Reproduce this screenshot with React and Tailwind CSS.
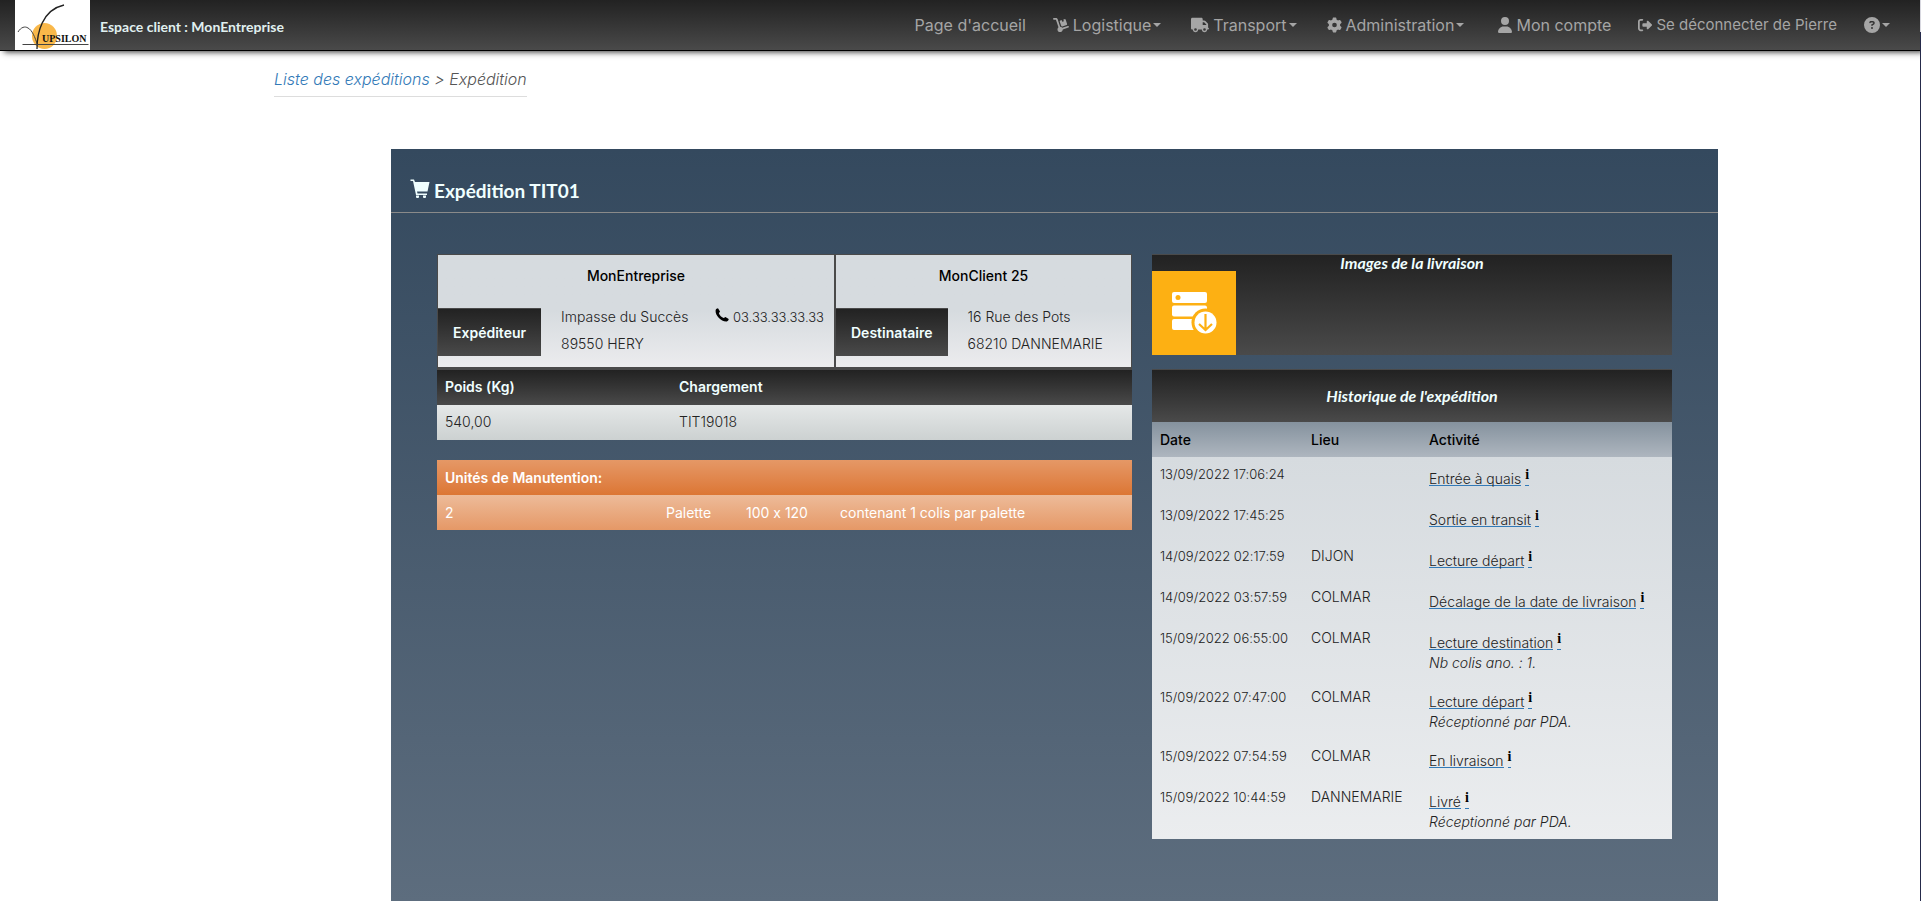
import { FaDolly, FaTruck, FaGear, FaUser, FaRightFromBracket, FaCircleQuestion } from "react-icons/fa6";

const navLink = "flex items-center gap-1 text-[#a5a5a5] hover:text-white";

function Caret() {
  return <span className="-ml-0.5 inline-block border-x-4 border-t-4 border-x-transparent border-t-current" />;
}

function Logo() {
  return (
    <svg viewBox="0 0 75 50" className="h-[50px] w-[75px] shrink-0 bg-white" role="img" aria-label="Yupsilon">
      <ellipse cx="29.500" cy="36" rx="12.500" ry="13" fill="#f9b84a" />
      <path d="M3 32 C6 27 10 26 13 28 C17 30 20 37 22.500 45" fill="none" stroke="#444" strokeWidth="1" />
      <path d="M22 49 C22 33 27 10 49 5" fill="none" stroke="#222" strokeWidth="1.300" />
      <path d="M7.500 44.500 H73.500" stroke="#444" strokeWidth="1.200" />
      <text x="27" y="42" fontFamily="Liberation Serif, serif" fontWeight="700" fontSize="10" fill="#111">UPSILON</text>
    </svg>
  );
}

function CartIcon() {
  return (
    <svg viewBox="0 0 20 20" className="mb-1.5 h-5 w-5" fill="currentColor" aria-hidden="true">
      <path d="M0.500 0.500 H4 L5 3 H19.500 L17.500 12.500 H7 L7.500 14.500 H17 V16 H6 L3 2 H0.500Z" />
      <path d="M6 16.500 H9 V18 L8.500 19 H6.500 L6 18Z M13 16.500 H16 V18 L15.500 19 H13.500 L13 18Z" />
    </svg>
  );
}

function HandsetIcon() {
  return (
    <svg viewBox="0 0 14 14" className="-mt-1 h-[14px] w-[14px] text-black" fill="currentColor" aria-hidden="true">
      <path d="M0.600 2.200 C1 1 2 0.300 3 0.300 L5 3.600 C5 4.400 3.900 4.600 3.900 5.300 C4.500 7.300 6.700 9.500 8.700 10.100 C9.400 10.100 9.600 9 10.400 9 L13.700 11 C13.700 12 13 13 11.800 13.400 C6.500 14 0 7.500 0.600 2.200Z" />
    </svg>
  );
}

function ServerDownloadIcon() {
  return (
    <svg viewBox="0 0 84 84" className="h-[84px] w-[84px]" aria-hidden="true">
      <rect x="20" y="21" width="35" height="11" rx="2" fill="#fff" />
      <circle cx="26" cy="26.500" r="2.500" fill="#fdb013" />
      <rect x="20" y="34.500" width="35" height="11" rx="2" fill="#fff" />
      <rect x="20" y="48" width="35" height="11" rx="2" fill="#fff" />
      <circle cx="53.500" cy="51.500" r="14" fill="#fdb013" />
      <circle cx="53.500" cy="51.500" r="11" fill="#fff" />
      <path d="M53.500 43 V59 M47 53 L53.500 59 L60 53" fill="none" stroke="#fdb013" strokeWidth="2.200" />
    </svg>
  );
}

const events = [
  { date: "13/09/2022 17:06:24", place: "", label: "Entrée à quais" },
  { date: "13/09/2022 17:45:25", place: "", label: "Sortie en transit" },
  { date: "14/09/2022 02:17:59", place: "DIJON", label: "Lecture départ" },
  { date: "14/09/2022 03:57:59", place: "COLMAR", label: "Décalage de la date de livraison" },
  { date: "15/09/2022 06:55:00", place: "COLMAR", label: "Lecture destination", note: "Nb colis ano. : 1." },
  { date: "15/09/2022 07:47:00", place: "COLMAR", label: "Lecture départ", note: "Réceptionné par PDA." },
  { date: "15/09/2022 07:54:59", place: "COLMAR", label: "En livraison" },
  { date: "15/09/2022 10:44:59", place: "DANNEMARIE", label: "Livré", note: "Réceptionné par PDA." },
];

function Party({ name, role, lines, phone }) {
  return (
    <div className="border border-[#4a4a4a] bg-linear-to-b from-[#d6dbdf] from-50% to-[#ececee] pb-[5px]">
      <h2 className="flex h-[53px] items-center justify-center pb-3 font-medium text-black">{name}</h2>
      <div className="flex items-start">
        <div className="flex h-12 items-center border-t border-[#4a4a4a] bg-linear-to-b from-[#222] to-[#4a4a4a] px-[15px] font-semibold text-[#f0ffff]">
          {role}
        </div>
        <div className="ml-5 flex flex-1 justify-between pr-[10px]">
          <div>
            {lines.map((line) => (
              <p key={line} className="h-[27px] leading-[18px]">{line}</p>
            ))}
          </div>
          {phone && (
            <p className="flex h-[18px] items-center gap-1 text-[13px]">
              <HandsetIcon />
              {phone}
            </p>
          )}
        </div>
      </div>
    </div>
  );
}

export default function App() {
  return (
    <div className="flex min-h-screen bg-white font-['Inter','Liberation_Sans',sans-serif] text-sm leading-5 font-light text-[#222] [font-feature-settings:'calt'_0]">
      <div className="min-w-0 flex-1">
        <header className="flex h-[51px] items-center border-b border-black bg-linear-to-b from-[#222] to-[#4a4a4a] pl-[15px] shadow-[4px_1px_6px_#333]">
          <Logo />
          <p className="ml-[10px] pt-1 font-['Lato',sans-serif] text-sm font-bold text-[#e0f0f0]">Espace client : MonEntreprise</p>
          <nav className="mr-[30px] ml-auto flex items-center text-base font-normal">
            <a href="#accueil" className={navLink}>Page d'accueil</a>
            <button className={navLink + " ml-[27px]"}><FaDolly className="h-4 w-4" />Logistique<Caret /></button>
            <button className={navLink + " ml-[30px]"}><FaTruck className="h-4 w-[18px]" />Transport<Caret /></button>
            <button className={navLink + " ml-[30px]"}><FaGear className="h-4 w-[15px]" />Administration<Caret /></button>
            <a href="#compte" className={navLink + " ml-[34px]"}><FaUser className="h-4 w-[14px]" />Mon compte</a>
            <a href="#deconnexion" className={navLink + " ml-[27px] text-[15px]"}><FaRightFromBracket className="h-[14px] w-[14px]" />Se déconnecter de Pierre</a>
            <button aria-label="Aide" className={navLink + " ml-[27px]"}><FaCircleQuestion className="h-4 w-4" /><Caret /></button>
          </nav>
        </header>

        <nav aria-label="Fil d'Ariane" className="ml-[274px] flex pt-[17px]">
          <p className="border-b border-[#ddd] pb-[5px] text-base leading-[23px] text-[#555] italic">
            <a href="#expeditions" className="text-[#337ab7]">Liste des expéditions</a> &gt; Expédition
          </p>
        </nav>

        <main className="mt-[52px] mr-[202px] ml-[391px] min-h-[752px] bg-linear-to-b from-[#34495e] to-[#5d6d7e] pb-[60px]">
          <h1 className="flex h-16 items-end gap-1 border-b border-[#8a8a8a] pb-[7px] pl-[19px] font-['Lato',sans-serif] text-[19px] leading-7 font-bold text-[#f0ffff]">
            <CartIcon />
            Expédition TIT01
          </h1>

          <div className="mt-[41px] mr-[46px] ml-[46px] grid grid-cols-[695fr_520fr] items-start gap-5">
            <section>
              <div className="grid grid-cols-[398fr_297fr] border-b-2 border-[#4a4a4a]">
                <Party name="MonEntreprise" role="Expéditeur" lines={["Impasse du Succès", "89550 HERY"]} phone="03.33.33.33.33" />
                <Party name="MonClient 25" role="Destinataire" lines={["16 Rue des Pots", "68210 DANNEMARIE"]} />
              </div>
              <table className="w-full table-fixed text-left">
                <thead>
                  <tr className="h-[35px] bg-linear-to-b from-[#222] to-[#4a4a4a] text-[#f0ffff]">
                    <th className="w-[234px] px-2 pb-0.5 font-semibold">Poids (Kg)</th>
                    <th className="px-2 pb-0.5 font-semibold">Chargement</th>
                  </tr>
                </thead>
                <tbody>
                  <tr className="h-[35px] bg-linear-to-b from-[#e5e8e8] to-[#ccd1d1]">
                    <td className="px-2 pb-0.5">540,00</td>
                    <td className="px-2 pb-0.5">TIT19018</td>
                  </tr>
                </tbody>
              </table>
              <table className="mt-5 w-full table-fixed text-left text-white">
                <colgroup>
                  <col className="w-[221px]" />
                  <col className="w-[80px]" />
                  <col className="w-[94px]" />
                  <col />
                </colgroup>
                <thead>
                  <tr className="h-[35px] bg-linear-to-b from-[#e59866] to-[#dc7633]">
                    <th colSpan={4} className="px-2 font-semibold">Unités de Manutention:</th>
                  </tr>
                </thead>
                <tbody>
                  <tr className="h-[35px] bg-linear-to-b from-[#edbb99] to-[#e59866] font-normal">
                    <td className="px-2">2</td>
                    <td className="px-2">Palette</td>
                    <td className="px-2">100 x 120</td>
                    <td className="px-2">contenant 1 colis par palette</td>
                  </tr>
                </tbody>
              </table>
            </section>

            <section>
              <div className="h-[101px] border-t border-[#4a4a4a] bg-linear-to-b from-[#222] to-[#4a4a4a]">
                <h2 className="h-4 text-center font-['Lato',sans-serif] text-base leading-4 font-bold text-[#f0ffff] italic">Images de la livraison</h2>
                <button aria-label="Télécharger les images" className="block bg-[#fdb013]"><ServerDownloadIcon /></button>
              </div>
              <h2 className="mt-[14px] flex h-[53px] items-center justify-center border-t border-[#4a4a4a] bg-linear-to-b from-[#222] to-[#4a4a4a] font-['Lato',sans-serif] text-base font-bold text-[#f0ffff] italic">
                Historique de l'expédition
              </h2>
              <table className="w-full table-fixed text-left">
                <thead>
                  <tr className="h-[35px] bg-linear-to-b from-[#85929e] to-[#aeb6bf] text-black">
                    <th className="w-[151px] px-2 font-medium">Date</th>
                    <th className="w-[118px] px-2 font-medium">Lieu</th>
                    <th className="px-2 font-medium">Activité</th>
                  </tr>
                </thead>
                <tbody className="bg-linear-to-b from-[#d6dbdf] to-[#ebedef]">
                  {events.map((event) => (
                    <tr key={event.date} className="align-top">
                      <td className="px-2 pt-[7px] text-[13px]">{event.date}</td>
                      <td className="px-2 pt-[7px]">{event.place}</td>
                      <td className="px-2 pt-[13px] pb-3">
                        <a href="#activite" className="flex w-fit items-end gap-1">
                          <span className="border-b border-[#337ab7] pb-px leading-[11px]">{event.label}</span>
                          <span className="h-4 border-b border-[#337ab7] font-['Liberation_Serif',serif] text-sm leading-[10px] font-bold text-black">i</span>
                        </a>
                        {event.note && <p className="mt-1 -mb-1 leading-[18px] italic">{event.note}</p>}
                      </td>
                    </tr>
                  ))}
                </tbody>
              </table>
            </section>
          </div>
        </main>
      </div>
      <div className="w-px bg-[linear-gradient(#d8d8e0_32px,#252a4a_32px)]" />
    </div>
  );
}
